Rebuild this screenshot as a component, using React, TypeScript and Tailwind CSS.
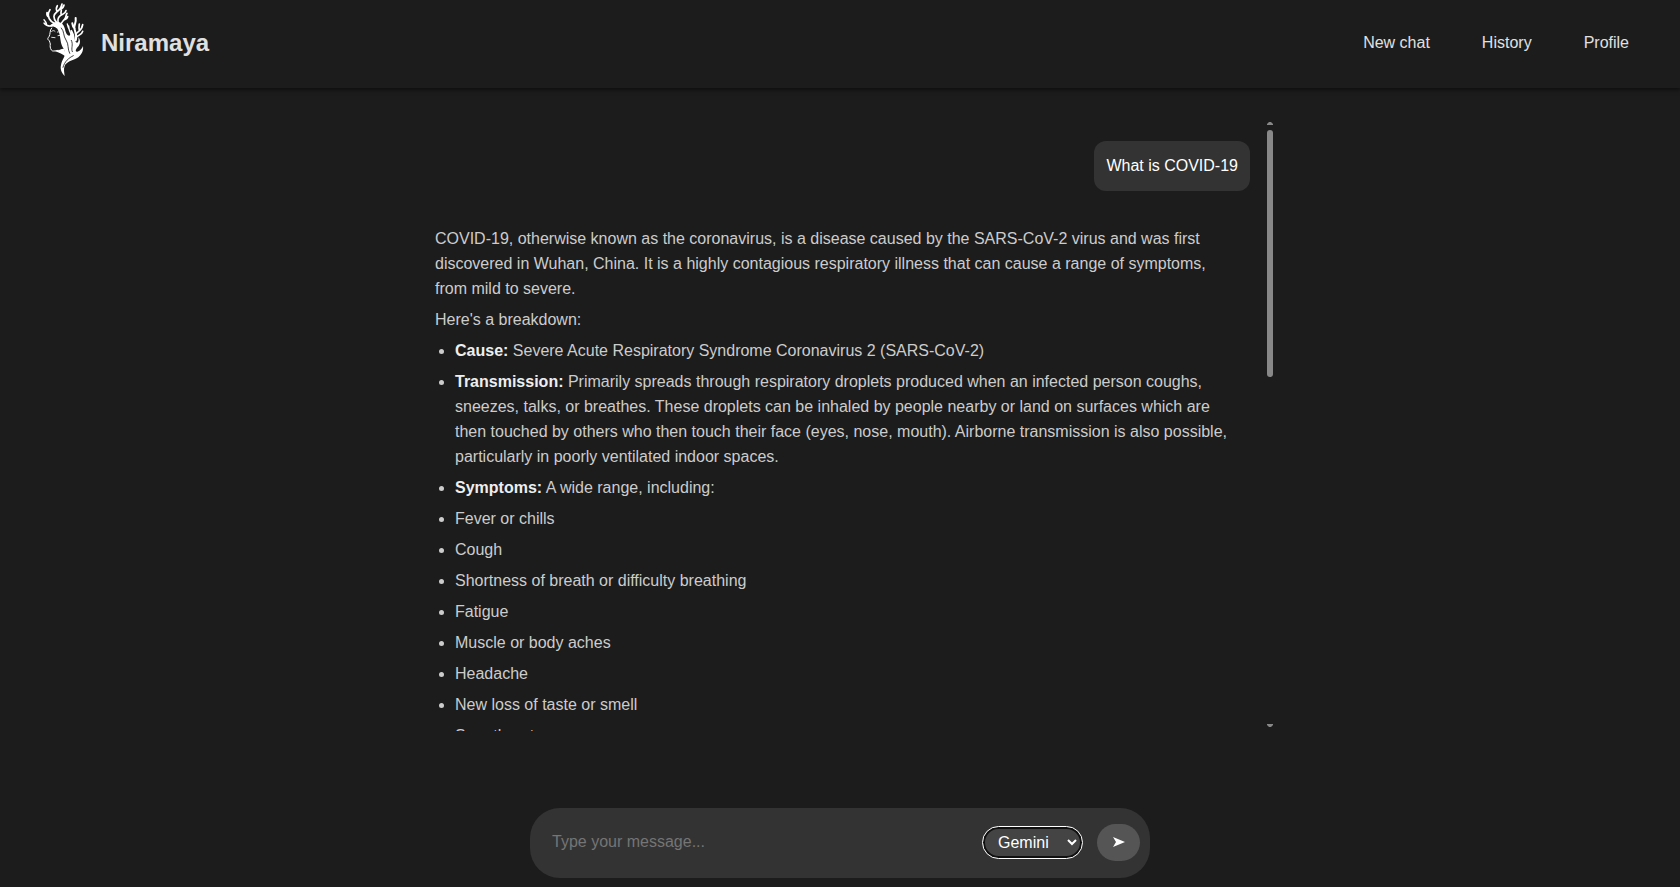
const symptoms = [
  'Fever or chills',
  'Cough',
  'Shortness of breath or difficulty breathing',
  'Fatigue',
  'Muscle or body aches',
  'Headache',
  'New loss of taste or smell',
  'Sore throat',
];

const navLinks = ['New chat', 'History', 'Profile'];

function Logo() {
  return (
    <svg viewBox="0 0 210 240" className="h-20 w-[70px]" fill="none" stroke="#fff" strokeLinecap="round" strokeLinejoin="round" aria-hidden="true">
      <g strokeWidth="5">
        <path d="M66 78C56 79 47 76 42 69M50 74C49 66 46 63 42 59" strokeWidth="4" />
        <path d="M86 74C70 70 56 62 55 46C54 39 57 34 60 29M57 52C50 48 50 43 51 38" />
        <path d="M80 68C68 54 70 44 80 36C90 29 94 22 96 12M82 35C78 29 78 23 82 17M91 28C98 25 101 20 102 15" />
        <path d="M84 66C82 54 88 47 98 43C105 40 107 37 108 32M94 45C92 38 93 34 94 30" />
        <path d="M92 76C94 64 102 62 106 54C109 48 108 44 111 40M102 60C110 58 112 54 113 50" />
      </g>
      <path d="M58 79C66 68 84 62 94 70C106 78 104 92 110 102C118 112 123 106 121 92C123 86 127 90 129 97C136 108 132 120 138 127C145 131 147 122 145 112C151 118 152 130 146 138C137 146 134 156 142 155C152 152 156 145 159 138C161 152 155 166 140 175C123 183 109 186 104 198C100 208 103 218 104 228C95 219 90 207 93 195C96 178 106 170 105 158C104 146 96 142 93 128C90 112 90 98 82 86C74 79 65 79 58 79Z" fill="#fff" stroke="none" />
      <g strokeWidth="6">
        <path d="M126 108C120 96 116 92 116 78M118 88C113 82 114 78 112 72" strokeWidth="4" />
        <path d="M137 121C143 105 133 94 133 82C133 72 139 68 137 54M134 86C128 82 128 78 127 70" />
        <path d="M138 102C145 92 156 92 158 74M148 91C146 84 147 80 148 72M137 112C148 104 156 104 158 94" strokeWidth="5" />
      </g>
      <path d="M65 84C58 92 62 102 57 110C51 117 53 119 58 122C60 126 59 128 61 132C60 139 60 143 64 150C67 155 74 153 84 151" strokeWidth="3" />
      <path d="M74 153C88 151 94 145 103 146L108 170C98 164 88 157 74 153Z" fill="#fff" stroke="none" />
      <path d="M65 112L75 113M82 96C87 94 91 97 94 102M84 107L92 106M65 94C69 91 72 91 75 94" strokeWidth="2.5" />
      <path d="M94 84C104 95 99 108 108 120C117 132 112 148 119 160M124 121C131 134 122 145 127 155M99 202C104 184 116 174 130 167" stroke="#1c1c1c" strokeWidth="2.5" />
    </svg>
  );
}

function Header() {
  return (
    <header className="flex h-[88px] shrink-0 items-center justify-between pl-[30px] pr-[51px] shadow-[0_2px_4px_rgba(0,0,0,0.5)]">
      <div className="flex items-center gap-px">
        <div className="-mt-2">
          <Logo />
        </div>
        <h1 className="pb-0.5 text-2xl font-bold text-[#e0e0e0]">Niramaya</h1>
      </div>
      <nav className="flex gap-[52px] pb-0.5">
        {navLinks.map((label) => (
          <a key={label} href="#" className="text-[#e0e0e0]">
            {label}
          </a>
        ))}
      </nav>
    </header>
  );
}

function Answer() {
  return (
    <div className="flex flex-col gap-1.5 p-3 leading-[25px] text-[#cccccc]">
      <p>
        COVID-19, otherwise known as the coronavirus, is a disease caused by the SARS-CoV-2 virus and was first
        discovered in Wuhan, China. It is a highly contagious respiratory illness that can cause a range of symptoms,
        from mild to severe.
      </p>
      <p>Here's a breakdown:</p>
      <ul className="flex list-disc flex-col gap-1.5 pl-5">
        <li>
          <strong className="text-[#eeeeee]">Cause:</strong> Severe Acute Respiratory Syndrome Coronavirus 2 (SARS-CoV-2)
        </li>
        <li>
          <strong className="text-[#eeeeee]">Transmission:</strong> Primarily spreads through respiratory droplets
          produced when an infected person coughs, sneezes, talks, or breathes. These droplets can be inhaled by people
          nearby or land on surfaces which are then touched by others who then touch their face (eyes, nose, mouth).
          Airborne transmission is also possible, particularly in poorly ventilated indoor spaces.
        </li>
        <li>
          <strong className="text-[#eeeeee]">Symptoms:</strong> A wide range, including:
        </li>
        {symptoms.map((item) => (
          <li key={item}>{item}</li>
        ))}
      </ul>
    </div>
  );
}

function ScrollTrack() {
  return (
    <div className="flex w-1.5 shrink-0 flex-col items-center gap-[5px] pt-0.5 pb-1" aria-hidden="true">
      <svg viewBox="0 0 6 3" className="h-[3px] w-1.5" fill="#888">
        <path d="M0 3V2L2 0H4L6 2V3Z" />
      </svg>
      <div className="w-full flex-1">
        <div className="h-[42%] w-full rounded-full bg-[#888]" />
      </div>
      <svg viewBox="0 0 6 3" className="h-[3px] w-1.5" fill="#888">
        <path d="M0 0V1L2 3H4L6 1V0Z" />
      </svg>
    </div>
  );
}

function Composer() {
  return (
    <form className="flex h-[70px] w-full max-w-[620px] items-center rounded-[30px] bg-[#333] pr-2.5 pb-0.5 pl-[22px]" onSubmit={(e) => e.preventDefault()}>
      <input
        type="text"
        aria-label="Message"
        placeholder="Type your message..."
        className="min-w-0 flex-1 bg-transparent text-white outline-none placeholder:text-[#757575]"
      />
      <select
        aria-label="Model"
        className="mr-[15px] h-[31px] w-[99px] rounded-2xl border-2 border-[#101010] bg-[#444] pl-[9px] text-white outline-1 outline-white"
      >
        <option>Gemini</option>
      </select>
      <button type="submit" aria-label="Send" className="flex h-[37px] w-[43px] items-center justify-center rounded-[20px] bg-[#555] text-white">
        <svg viewBox="0 0 12 10" className="h-2.5 w-3" fill="currentColor">
          <path d="M0 0L12 5L0 10L3 5Z" />
        </svg>
      </button>
    </form>
  );
}

export default function App() {
  return (
    <div className="flex h-screen flex-col bg-[#1c1c1c] font-['Liberation_Sans',Arial,sans-serif] text-base">
      <Header />
      <main className="flex min-h-0 flex-1 flex-col items-center pt-8 pb-[9px]">
        <section className="flex min-h-0 w-full max-w-[866px] flex-1">
          <div className="flex min-w-0 flex-1 flex-col gap-[23px] overflow-y-auto pt-[21px] pr-[17px] pl-4 [scrollbar-width:none]">
            <p className="shrink-0 self-end rounded-xl bg-[#333] p-3 leading-[26px] text-white">What is COVID-19</p>
            <Answer />
          </div>
          <ScrollTrack />
        </section>
        <div className="flex w-full shrink-0 justify-center pt-[77px]">
          <Composer />
        </div>
      </main>
    </div>
  );
}
